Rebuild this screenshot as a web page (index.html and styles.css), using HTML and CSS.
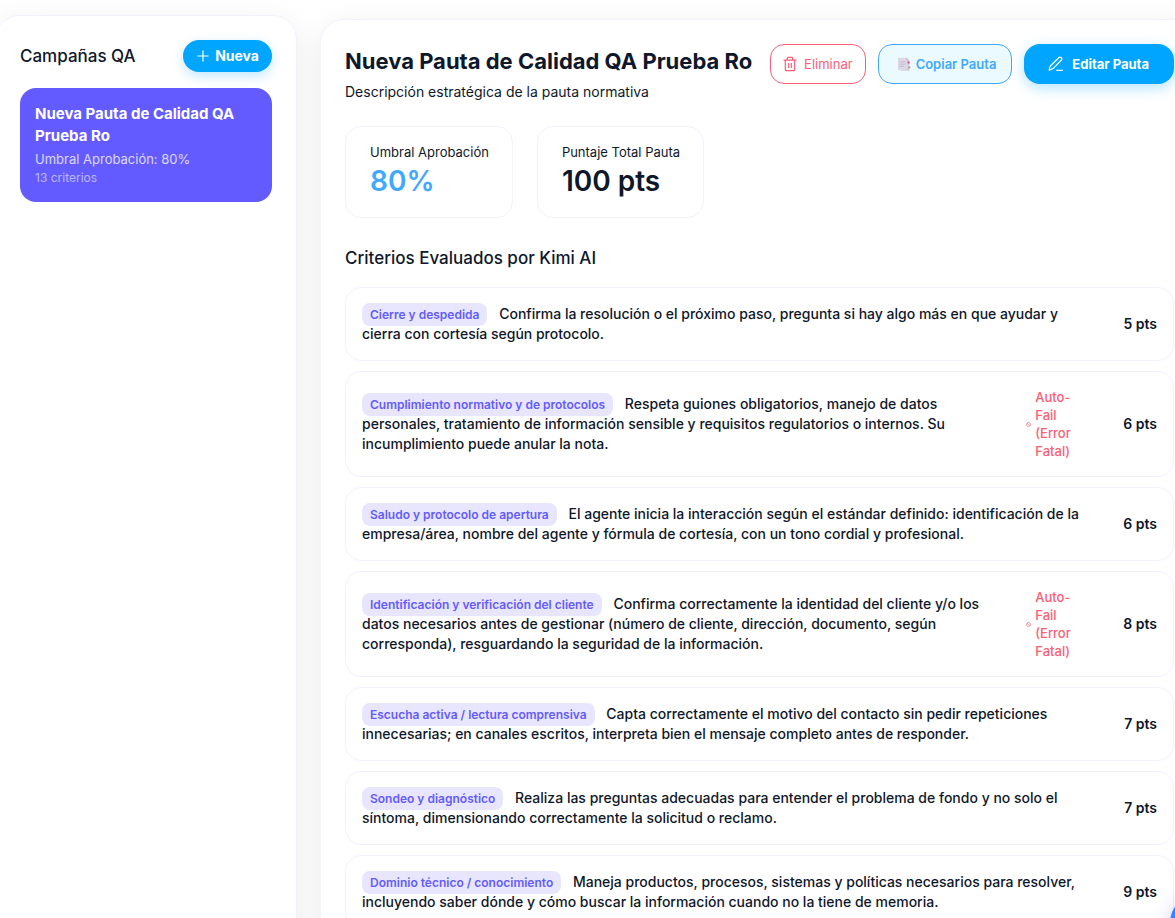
FILE: index.html
```html
<!DOCTYPE html>
<html lang="es">
<head>
<meta charset="utf-8">
<meta name="viewport" content="width=device-width, initial-scale=1">
<title>Campañas QA</title>
<link rel="stylesheet" href="styles.css">
</head>
<body>
<div class="layout">
  <aside class="sidebar">
    <div class="sidebar-head">
      <h2 class="section-title">Campañas QA</h2>
      <button class="btn btn-new" type="button">
        <svg class="icon" viewBox="0 0 14 14" fill="none" stroke="currentColor" stroke-width="1.2"><path d="M7 1.5v11M1.5 7h11"/></svg>
        Nueva
      </button>
    </div>
    <button class="campaign" type="button">
      <span class="campaign-name">Nueva Pauta de Calidad QA Prueba Ro</span>
      <span class="campaign-threshold">Umbral Aprobación: 80%</span>
      <span class="campaign-count">13 criterios</span>
    </button>
  </aside>

  <main class="panel">
    <header class="panel-head">
      <div class="panel-text">
        <h1 class="title">Nueva Pauta de Calidad QA Prueba Ro</h1>
        <p class="description">Descripción estratégica de la pauta normativa</p>
      </div>
      <div class="actions">
        <button class="btn btn-delete" type="button">
          <svg class="icon" viewBox="0 0 14 16" fill="none" stroke="currentColor" stroke-width="1.2"><path d="M.5 4.2h13M2.3 4.2v9.6q0 .9.9.9h7.6q.9 0 .9-.9V4.2M4.4 4V2q0-.7.7-.7h3.8q.7 0 .7.7v2M5.7 7v5M8.3 7v5"/></svg>
          Eliminar
        </button>
        <button class="btn btn-copy" type="button">
          <svg class="icon" viewBox="0 0 14 14"><path fill="#c9c1d6" d="M3.5 2.5h8.8v11H3.5z"/><path fill="#ded8e6" d="M1 .8h8.4l2 2V11l-2 2H1z"/><path fill="#b9afc8" d="M9.4.8l2 2h-2zM2.5 4.5h6v.8h-6zM2.5 6.7h6v.8h-6zM2.5 8.9h4.2v.8H2.5z"/><path fill="#e8436f" d="M10.5 4.5h2v2h-2z"/><path fill="#c79b62" d="M11.3 9.5h2v1.8h-2z"/></svg>
          Copiar Pauta
        </button>
        <button class="btn btn-edit" type="button">
          <svg class="icon" viewBox="0 0 16 16" fill="none" stroke="currentColor" stroke-width="1.2" stroke-linejoin="round"><path d="M1.2 14.2l.9-4L11 1.5q1.1-.9 2.3.2t.2 2.3L4.8 12.8zM8.3 14.4h6.5"/></svg>
          Editar Pauta
        </button>
      </div>
    </header>

    <div class="stats">
      <div class="stat"><span class="stat-label">Umbral Aprobación</span><strong class="stat-value stat-accent">80%</strong></div>
      <div class="stat"><span class="stat-label">Puntaje Total Pauta</span><strong class="stat-value">100 pts</strong></div>
    </div>

    <h2 class="section-title">Criterios Evaluados por Kimi AI</h2>
    <ul class="criteria">
      <li class="criterion">
        <p class="criterion-text"><span class="tag">Cierre y despedida</span> Confirma la resolución o el próximo paso, pregunta si hay algo más en que ayudar y cierra con cortesía según protocolo.</p>
        <span class="points">5 pts</span>
      </li>
      <li class="criterion">
        <p class="criterion-text"><span class="tag">Cumplimiento normativo y de protocolos</span> Respeta guiones obligatorios, manejo de datos personales, tratamiento de información sensible y requisitos regulatorios o internos. Su incumplimiento puede anular la nota.</p>
        <span class="fatal"><svg class="fatal-icon" viewBox="0 0 5 5" fill="none" stroke="currentColor" stroke-width=".6"><circle cx="2.5" cy="2.5" r="2"/><path d="M1.3 1.3l2.4 2.4"/></svg><span class="fatal-text">Auto-Fail (Error Fatal)</span></span>
        <span class="points">6 pts</span>
      </li>
      <li class="criterion">
        <p class="criterion-text"><span class="tag">Saludo y protocolo de apertura</span> El agente inicia la interacción según el estándar definido: identificación de la empresa/área, nombre del agente y fórmula de cortesía, con un tono cordial y profesional.</p>
        <span class="points">6 pts</span>
      </li>
      <li class="criterion">
        <p class="criterion-text"><span class="tag">Identificación y verificación del cliente</span> Confirma correctamente la identidad del cliente y/o los datos necesarios antes de gestionar (número de cliente, dirección, documento, según corresponda), resguardando la seguridad de la información.</p>
        <span class="fatal"><svg class="fatal-icon" viewBox="0 0 5 5" fill="none" stroke="currentColor" stroke-width=".6"><circle cx="2.5" cy="2.5" r="2"/><path d="M1.3 1.3l2.4 2.4"/></svg><span class="fatal-text">Auto-Fail (Error Fatal)</span></span>
        <span class="points">8 pts</span>
      </li>
      <li class="criterion">
        <p class="criterion-text"><span class="tag">Escucha activa / lectura comprensiva</span> Capta correctamente el motivo del contacto sin pedir repeticiones innecesarias; en canales escritos, interpreta bien el mensaje completo antes de responder.</p>
        <span class="points">7 pts</span>
      </li>
      <li class="criterion">
        <p class="criterion-text"><span class="tag">Sondeo y diagnóstico</span> Realiza las preguntas adecuadas para entender el problema de fondo y no solo el síntoma, dimensionando correctamente la solicitud o reclamo.</p>
        <span class="points">7 pts</span>
      </li>
      <li class="criterion">
        <p class="criterion-text"><span class="tag">Dominio técnico / conocimiento</span> Maneja productos, procesos, sistemas y políticas necesarios para resolver, incluyendo saber dónde y cómo buscar la información cuando no la tiene de memoria.</p>
        <span class="points">9 pts</span>
      </li>
    </ul>
  </main>
</div>
<button class="fab" type="button" aria-label="Asistente"></button>
</body>
</html>
```
FILE: styles.css
```css
* { box-sizing: border-box; }
html { overflow: hidden; }
body {
  margin: 0;
  min-height: 100vh;
  overflow: hidden;
  background: #fff;
  color: #0f172a;
  font-family: Inter, "Liberation Sans", sans-serif;
  font-size: 14px;
  line-height: 20px;
}
h1, h2, p, ul { margin: 0; padding: 0; }
button { font: inherit; cursor: pointer; }

.layout {
  display: grid;
  grid-template-columns: 302px minmax(0, 1fr);
  gap: 23px;
  min-height: 100vh;
  margin: 0 -24px 0 -5px;
  padding-top: 15px;
}
.sidebar, .panel {
  padding: 24px;
  border: 1px solid #f3f1ff;
  border-radius: 24px;
  background: #fff;
  box-shadow: 0 8px 32px rgba(0, 0, 0, .08);
}
.panel { margin-top: 4px; }
.sidebar-head {
  display: flex;
  align-items: center;
  justify-content: space-between;
  margin-bottom: 16px;
}
.section-title { font-size: 17px; font-weight: 500; line-height: 24px; }

.btn {
  display: inline-flex;
  align-items: center;
  justify-content: center;
  gap: 8px;
  height: 40px;
  border: 1px solid transparent;
  border-radius: 14px;
  font-size: 13px;
  white-space: nowrap;
}
.icon { width: 14px; height: 14px; flex: none; }
.btn-new {
  height: 32px;
  padding: 0 12px;
  gap: 5px;
  border-radius: 16px;
  background: #00a5ff;
  color: #fff;
  font-size: 14px;
  font-weight: 700;
  box-shadow: 0 4px 12px rgba(0, 165, 255, .25);
}
.btn-delete { padding: 0 12px; gap: 7px; border-color: #ff5c75; background: #fff; color: #ff5c75; }
.btn-delete .icon { height: 16px; }
.btn-copy { padding: 0 15px 0 18px; gap: 5px; border-color: #40a9ff; background: #ebfaff; color: #40a9ff; font-weight: 600; }
.btn-edit {
  padding: 0 24px 0 23px;
  border-radius: 16px;
  background: #00a5ff;
  color: #fff;
  font-weight: 700;
  box-shadow: 0 4px 14px rgba(0, 165, 255, .3);
}
.btn-edit .icon { width: 16px; height: 16px; }

.campaign {
  display: flex;
  flex-direction: column;
  width: 100%;
  padding: 15px;
  border: 0;
  border-radius: 16px;
  background: #635bff;
  color: #fff;
  text-align: left;
}
.campaign-name { font-size: 15px; font-weight: 700; line-height: 22px; }
.campaign-threshold { margin-top: 3px; font-size: 13px; line-height: 18px; opacity: .75; }
.campaign-count { font-size: 12px; line-height: 19px; opacity: .55; }

.panel-head { display: flex; justify-content: space-between; gap: 8px; margin-bottom: 24px; }
.title { font-size: 22px; font-weight: 700; line-height: 34px; white-space: nowrap; }
.description { margin-top: 4px; }
.panel-text { min-width: 0; }
.actions { display: flex; gap: 12px; }

.stats { display: flex; gap: 24px; margin-bottom: 28px; }
.stat {
  display: flex;
  flex-direction: column;
  padding: 16px 23px 16px 24px;
  border: 1px solid #f3f1ff;
  border-radius: 16px;
}
.stat-label { font-size: 13px; line-height: 18px; }
.stat-value { font-size: 28px; font-weight: 600; line-height: 40px; }
.stat-accent { color: #40a9ff; }

.criteria { display: flex; flex-direction: column; gap: 10px; margin-top: 17px; list-style: none; }
.criterion {
  display: flex;
  align-items: center;
  justify-content: space-between;
  gap: 24px;
  padding: 16px;
  border: 1px solid #f3f1ff;
  border-radius: 16px;
  font-weight: 500;
}
.criterion-text { flex: 1; }
.tag {
  margin-right: 8px;
  padding: 4px 8px;
  border-radius: 8px;
  background: #e8e6ff;
  color: #635bff;
  font-size: 12px;
  font-weight: 600;
  line-height: 16px;
}
.points { flex: none; font-weight: 600; }
.fatal { display: flex; align-items: center; gap: 4px; margin: 0 24px 0 8px; color: #ff5c75; font-size: 13px; line-height: 18px; }
.fatal-icon { width: 5px; height: 5px; flex: none; }
.fatal-text { width: 40px; }

.fab {
  position: fixed;
  right: -55px;
  bottom: -35px;
  width: 60px;
  height: 60px;
  border: 0;
  border-radius: 50%;
  background: #4080ff;
  box-shadow: 0 4px 20px rgba(99, 91, 255, .3);
}
```
